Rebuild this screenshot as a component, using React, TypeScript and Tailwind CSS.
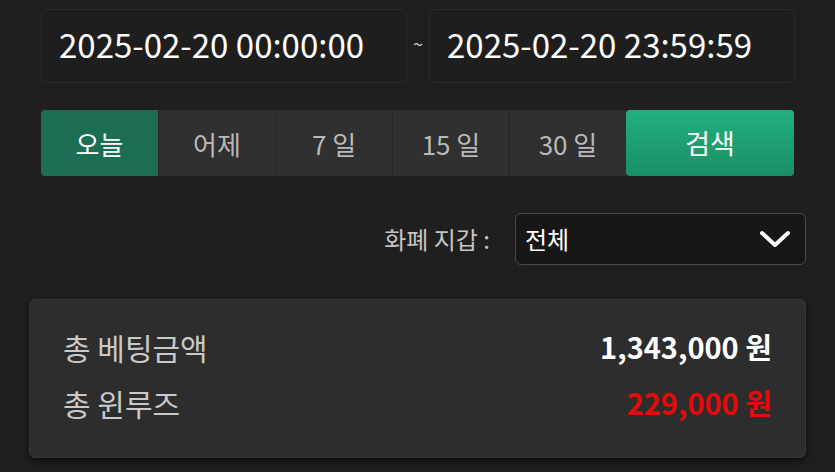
import React from "react";

const font = { fontFamily: '"Noto Sans CJK KR", "Noto Sans", sans-serif' };

export default function App() {
  const periods = ["어제", "7 일", "15 일", "30 일"];
  return (
    <div className="w-[835px] h-[472px] bg-[#1f1f1f] overflow-hidden" style={font}>
      <div className="flex items-center pl-[41px] pt-[9px]">
        <div className="w-[366px] h-[74px] rounded-[6px] border border-[#2c2c2c] bg-[#1e1e1e] flex items-center pl-[17px] pb-[3px] text-white text-[33px] leading-none">
          2025-02-20 00:00:00
        </div>
        <div className="w-[22px] text-center text-[#cfcfcf] text-[18px] pb-[6px]">~</div>
        <div className="w-[366px] h-[74px] rounded-[6px] border border-[#2c2c2c] bg-[#1e1e1e] flex items-center pl-[17px] pb-[3px] text-white text-[33px] leading-none">
          2025-02-20 23:59:59
        </div>
      </div>

      <div className="flex ml-[41px] mt-[27px] w-[753px] h-[66px]">
        <div className="w-[117px] rounded-l-[4px] bg-[#1b6e53] text-white flex items-center justify-center text-[26px]">
          오늘
        </div>
        {periods.map((p) => (
          <div
            key={p}
            className="w-[117px] border-l border-[#262626] bg-[#303030] text-[#b9b9b9] flex items-center justify-center text-[26px]"
          >
            {p}
          </div>
        ))}
        <div className="flex-1 rounded-[4px] bg-gradient-to-b from-[#22b07e] to-[#1a8f66] text-white flex items-center justify-center text-[27px]">
          검색
        </div>
      </div>

      <div className="flex items-center justify-end mr-[29px] mt-[37px]">
        <span className="text-[#c4c4c4] text-[24px] mr-[25px]">화폐 지갑 :</span>
        <div className="w-[291px] h-[52px] rounded-[6px] border border-[#4a4a4a] bg-[#171717] flex items-center justify-between pl-[9px] pr-[14px]">
          <span className="text-white text-[24px]">전체</span>
          <svg width="32" height="20" viewBox="0 0 32 20" fill="none">
            <path d="M3 4 L16 16 L29 4" stroke="white" strokeWidth="4" strokeLinecap="round" strokeLinejoin="round" />
          </svg>
        </div>
      </div>

      <div className="mx-[29px] mt-[34px] h-[159px] rounded-[6px] bg-[#2d2d2d] border border-[#353535] shadow-[0_3px_6px_rgba(0,0,0,0.6)] px-[33px] pt-[25px]">
        <div className="flex items-center justify-between h-[44px]">
          <span className="text-[#c9c9c9] text-[30px]">총 베팅금액</span>
          <span className="text-white text-[29px] font-bold">1,343,000 원</span>
        </div>
        <div className="flex items-center justify-between h-[44px] mt-[12px]">
          <span className="text-[#c9c9c9] text-[30px]">총 윈루즈</span>
          <span className="text-[#e60a0a] text-[29px] font-bold">229,000 원</span>
        </div>
      </div>
    </div>
  );
}
